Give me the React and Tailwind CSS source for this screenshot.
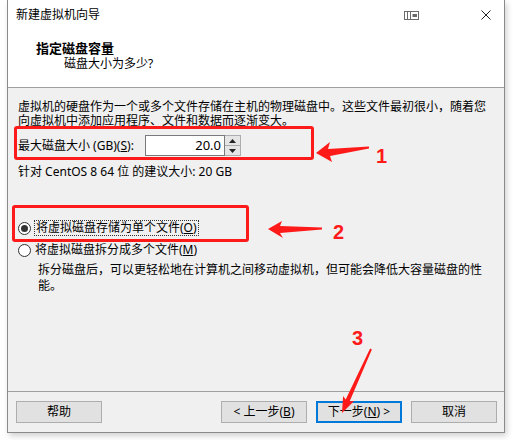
import React from 'react'

const FONT = "font-['Noto_Sans','Noto_Sans_CJK_SC',sans-serif]"

function Btn({ children, primary }) {
  return (
    <div
      className={`w-[86px] h-[22px] flex items-center justify-center text-[12px] bg-[#e1e1e1] text-black ${
        primary ? 'border-2 border-[#0078d7]' : 'border border-[#adadad]'
      }`}
    >
      {children}
    </div>
  )
}

function Radio({ checked }) {
  return (
    <div className="w-[13px] h-[13px] rounded-full border border-[#333] bg-white flex items-center justify-center shrink-0">
      {checked && <div className="w-[7px] h-[7px] rounded-full bg-[#333]" />}
    </div>
  )
}

export default function App() {
  return (
    <div className={`relative w-[513px] h-[440px] bg-white overflow-hidden ${FONT}`}>
      <div className="ml-[7px] w-[498px] h-[433px] border-x border-b border-[#8a8a8a] bg-[#f0f0f0] flex flex-col shadow-[2px_3px_6px_rgba(0,0,0,0.18)]">
        {/* title bar */}
        <div className="h-[30px] bg-white flex items-center pl-2 pr-3 text-[12px] text-black">
          <span>新建虚拟机向导</span>
          <div className="ml-auto mr-[62px]">
            <svg width="15" height="9" viewBox="0 0 15 9">
              <rect x="0.5" y="0.5" width="14" height="8" fill="#fff" stroke="#6b6b6b" />
              <line x1="3.5" y1="1" x2="3.5" y2="8" stroke="#6b6b6b" />
              <line x1="6.5" y1="1" x2="6.5" y2="8" stroke="#6b6b6b" />
              <rect x="8.5" y="3" width="4.5" height="3" fill="#6b6b6b" />
            </svg>
          </div>
          <svg width="10" height="10" viewBox="0 0 10 10" className="mr-[1px]">
            <path d="M0.5 0.5 L9.5 9.5 M9.5 0.5 L0.5 9.5" stroke="#222" strokeWidth="1" />
          </svg>
        </div>

        {/* header */}
        <div className="h-[58px] bg-white border-b border-[#a0a0a0] text-black">
          <div className="pl-[28px] pt-[10px] text-[13px] font-bold leading-[16px]">指定磁盘容量</div>
          <div className="pl-[56px] text-[12px] leading-[16px]">磁盘大小为多少?</div>
        </div>

        {/* body */}
        <div className="flex-1 pl-[10px] text-[12px] text-black">
          <p className="mt-[12px] leading-[14px]">
            虚拟机的硬盘作为一个或多个文件存储在主机的物理磁盘中。这些文件最初很小，随着您
            <br />
            向虚拟机中添加应用程序、文件和数据而逐渐变大。
          </p>

          <div className="mt-[7px] flex items-center h-[21px]">
            <span className="w-[127px]">
              最大磁盘大小 (GB)(<span className="underline">S</span>):
            </span>
            <div className="w-[80px] h-[21px] bg-white border border-[#7a7a7a] flex items-center justify-end pr-[3px] text-[13px]">
              20.0
            </div>
            <div className="w-[16px] h-[21px] border border-l-0 border-[#adadad] bg-[#f0f0f0] flex flex-col">
              <div className="flex-1 flex items-center justify-center border-b border-[#adadad] bg-[#e5e5e5]">
                <svg width="7" height="4" viewBox="0 0 7 4"><path d="M3.5 0 L7 4 L0 4 Z" fill="#222" /></svg>
              </div>
              <div className="flex-1 flex items-center justify-center bg-[#e5e5e5]">
                <svg width="7" height="4" viewBox="0 0 7 4"><path d="M0 0 L7 0 L3.5 4 Z" fill="#222" /></svg>
              </div>
            </div>
          </div>

          <p className="mt-[8px] leading-[16px]">针对 CentOS 8 64 位 的建议大小: 20 GB</p>

          <div className="mt-[40px] flex items-center h-[16px] gap-[3px]">
            <Radio checked />
            <span className="border border-dotted border-[#333] leading-[14px] px-[1px]">
              将虚拟磁盘存储为单个文件(<span className="underline">O</span>)
            </span>
          </div>

          <div className="mt-[6px] flex items-center h-[16px] gap-[4px]">
            <Radio />
            <span className="leading-[14px]">
              将虚拟磁盘拆分成多个文件(<span className="underline">M</span>)
            </span>
          </div>

          <p className="mt-[4px] ml-[20px] leading-[16px]">
            拆分磁盘后，可以更轻松地在计算机之间移动虚拟机，但可能会降低大容量磁盘的性
            <br />
            能。
          </p>
        </div>

        {/* footer */}
        <div className="h-[41px] border-t border-[#a0a0a0] flex items-start pt-[9px] pl-[8px] pr-[7px]">
          <Btn>帮助</Btn>
          <div className="ml-auto flex gap-[9px]">
            <Btn>
              &lt; 上一步(<span className="underline">B</span>)
            </Btn>
            <Btn primary>
              下一步(<span className="underline">N</span>) &gt;
            </Btn>
            <Btn>取消</Btn>
          </div>
        </div>
      </div>

      {/* annotations */}
      <div className="absolute left-[14px] top-[126px] w-[300px] h-[34px] border-[3px] border-[#ff1a1a] rounded-[3px] pointer-events-none" />
      <div className="absolute left-[12px] top-[205px] w-[237px] h-[37px] border-[3px] border-[#ff1a1a] rounded-[3px] pointer-events-none" />

      <svg className="absolute inset-0 pointer-events-none" width="513" height="440" viewBox="0 0 513 440">
        <polygon points="316,153 330,142 328,149 369,146.5 369,148.5 330,156 332,162" fill="#ff1a1a" />
        <polygon points="268,229 282,221 280,226 322,227.5 322,229.5 280,233 283,238" fill="#ff1a1a" />
        <polygon points="342,413 343.1,395.9 345.7,399.4 370.1,348.6 371.9,349.4 349.7,401.2 354.1,400.9" fill="#ff1a1a" />
      </svg>

      <span className="absolute left-[376px] top-[146px] text-[20px] leading-[20px] font-bold text-[#ff1a1a] font-['Liberation_Sans',sans-serif]">1</span>
      <span className="absolute left-[333px] top-[222px] text-[20px] leading-[20px] font-bold text-[#ff1a1a] font-['Liberation_Sans',sans-serif]">2</span>
      <span className="absolute left-[352px] top-[328px] text-[20px] leading-[20px] font-bold text-[#ff1a1a] font-['Liberation_Sans',sans-serif]">3</span>
    </div>
  )
}
